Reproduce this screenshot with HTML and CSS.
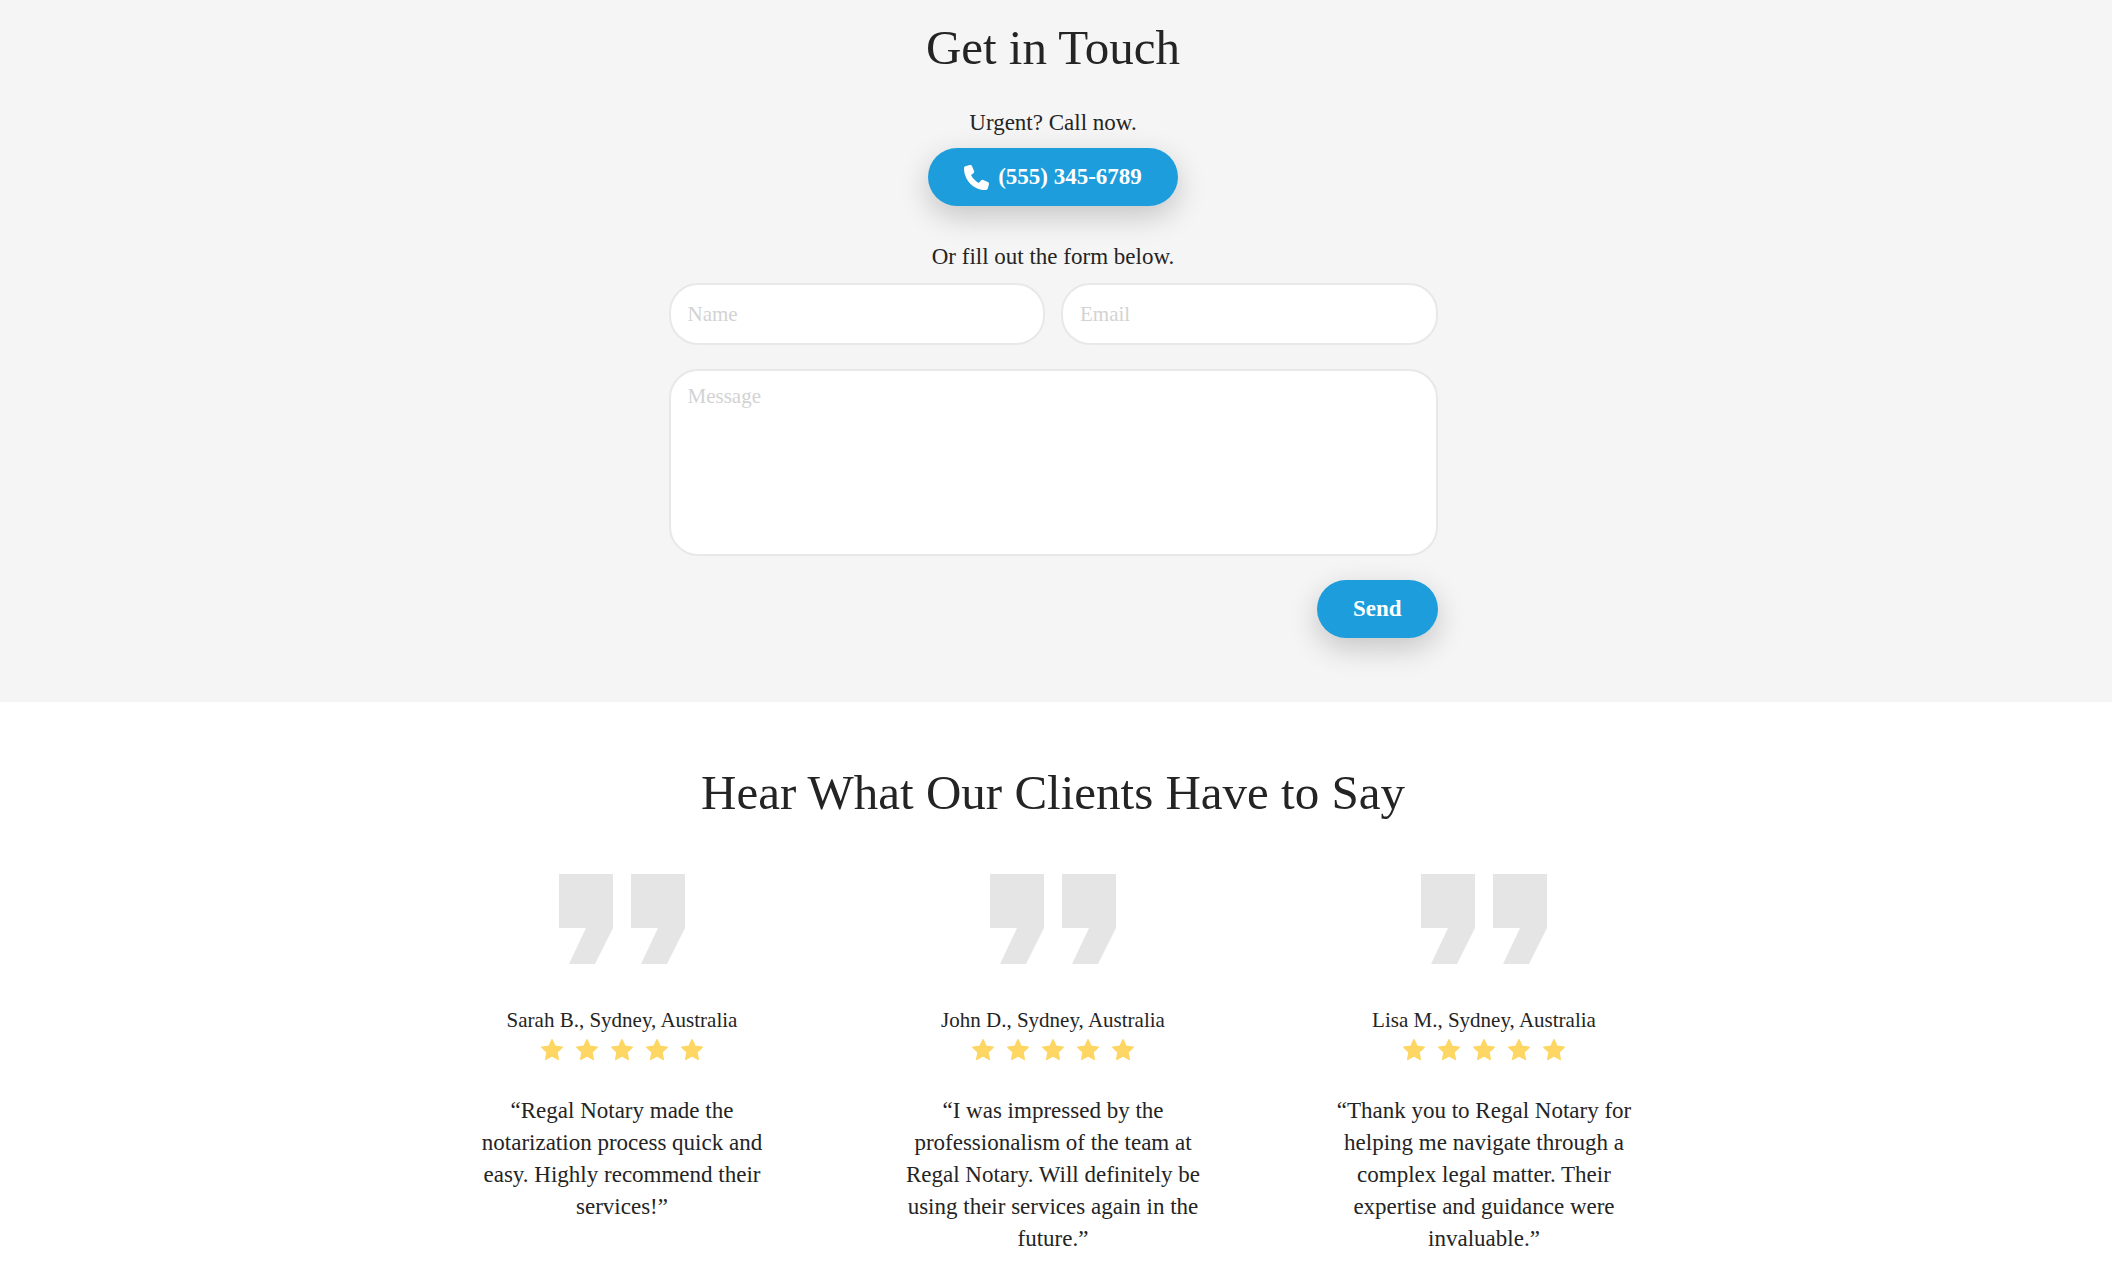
FILE: index.html
```html
<!DOCTYPE html>
<html lang="en">
<head>
<meta charset="utf-8">
<meta name="viewport" content="width=device-width, initial-scale=1">
<title>Regal Notary</title>
<link rel="stylesheet" href="styles.css">
</head>
<body>
<svg class="defs" aria-hidden="true">
  <symbol id="star" viewBox="0 0 24 24"><path d="M12 1.800l3 6.500 7.200.9-5.300 5 1.400 7.200-6.300-3.500-6.300 3.500 1.400-7.200-5.300-5 7.200-.9z" stroke="currentColor" stroke-width="1.500" stroke-linejoin="round"/></symbol>
  <symbol id="quote" viewBox="0 0 126 90"><path d="M0 0h54v54L36 90H10l17-36H0zM72 0h54v54l-18 36H82l17-36H72z"/></symbol>
</svg>
<main>
  <section class="contact">
    <h2 class="title">Get in Touch</h2>
    <p class="lead">Urgent? Call now.</p>
    <a class="button call" href="tel:5553456789">
      <svg class="phone" viewBox="0 0 512 512" aria-hidden="true"><path d="M164.900 24.600c-7.700-18.600-28-28.500-47.400-23.200l-88 24C12.100 30.200 0 46 0 64c0 247.400 200.600 448 448 448 18 0 33.800-12.100 38.600-29.500l24-88c5.300-19.400-4.600-39.700-23.200-47.400l-96-40c-16.300-6.800-35.200-2.100-46.300 11.600L304.700 368C234.300 334.700 177.300 277.700 144 207.300l49.300-40.300c13.700-11.200 18.400-30 11.600-46.300z"/></svg>
      <span>(555) 345-6789</span>
    </a>
    <p class="lead second">Or fill out the form below.</p>
    <form class="form">
      <input class="field" type="text" name="name" placeholder="Name" aria-label="Name">
      <input class="field" type="email" name="email" placeholder="Email" aria-label="Email">
      <textarea class="field message" name="message" placeholder="Message" aria-label="Message"></textarea>
      <button class="button send" type="submit">Send</button>
    </form>
  </section>
  <section class="clients">
    <h2 class="title">Hear What Our Clients Have to Say</h2>
    <div class="reviews">
      <article class="review">
        <svg class="quote" aria-hidden="true"><use href="#quote"/></svg>
        <p class="author">Sarah B., Sydney, Australia</p>
        <div class="stars" role="img" aria-label="5 out of 5 stars"><svg><use href="#star"/></svg><svg><use href="#star"/></svg><svg><use href="#star"/></svg><svg><use href="#star"/></svg><svg><use href="#star"/></svg></div>
        <p class="text">“Regal Notary made the<br>notarization process quick and<br>easy. Highly recommend their<br>services!”</p>
      </article>
      <article class="review">
        <svg class="quote" aria-hidden="true"><use href="#quote"/></svg>
        <p class="author">John D., Sydney, Australia</p>
        <div class="stars" role="img" aria-label="5 out of 5 stars"><svg><use href="#star"/></svg><svg><use href="#star"/></svg><svg><use href="#star"/></svg><svg><use href="#star"/></svg><svg><use href="#star"/></svg></div>
        <p class="text">“I was impressed by the<br>professionalism of the team at<br>Regal Notary. Will definitely be<br>using their services again in the<br>future.”</p>
      </article>
      <article class="review">
        <svg class="quote" aria-hidden="true"><use href="#quote"/></svg>
        <p class="author">Lisa M., Sydney, Australia</p>
        <div class="stars" role="img" aria-label="5 out of 5 stars"><svg><use href="#star"/></svg><svg><use href="#star"/></svg><svg><use href="#star"/></svg><svg><use href="#star"/></svg><svg><use href="#star"/></svg></div>
        <p class="text">“Thank you to Regal Notary for<br>helping me navigate through a<br>complex legal matter. Their<br>expertise and guidance were<br>invaluable.”</p>
      </article>
    </div>
  </section>
</main>
</body>
</html>
```
FILE: styles.css
```css
* { box-sizing: border-box; }

body {
  margin: 0;
  background: #fff;
  color: #242424;
  font-family: "Liberation Serif", serif;
  font-size: 23px;
  line-height: 32px;
}

h2, p { margin: 0; }

.defs { display: none; }

.contact,
.clients {
  display: flex;
  flex-direction: column;
  align-items: center;
  padding: 18px 22px 64px 16px;
}

.contact { background: #f5f5f5; }

.title {
  font-size: 49px;
  font-weight: 400;
  line-height: 60px;
  text-align: center;
}

.lead { margin: 29px 0 9px; }
.lead.second { margin: 35px 0 10px; }

.button {
  display: flex;
  align-items: center;
  justify-content: center;
  gap: 9px;
  height: 58px;
  padding: 0 36px;
  border: 0;
  border-radius: 29px;
  background: #1d9ddb;
  box-shadow: 0 10px 30px rgba(0, 0, 0, .2);
  color: #fff;
  font: 700 23px/32px "Liberation Serif", serif;
  text-decoration: none;
}

.phone {
  width: 25px;
  height: 25px;
  fill: #fff;
}

.form {
  display: grid;
  grid-template-columns: 1fr 1fr;
  gap: 24px 16px;
  width: 100%;
  max-width: 769px;
}

.field {
  width: 100%;
  height: 62px;
  padding: 0 17px;
  border: 2px solid #e8e8e8;
  border-radius: 29px;
  background: #fff;
  color: #242424;
  font: 21px/28px "Liberation Serif", serif;
}

.field::placeholder { color: #d3d3d3; opacity: 1; }

.message {
  grid-column: 1 / -1;
  height: 187px;
  padding-top: 11px;
  resize: none;
}

.send {
  grid-column: 2;
  justify-self: end;
}

.clients { padding-top: 61px; }

.reviews {
  display: grid;
  grid-template-columns: repeat(3, 1fr);
  width: 100%;
  max-width: 1293px;
  margin-top: 51px;
}

.review {
  display: flex;
  flex-direction: column;
  align-items: center;
  text-align: center;
}

.quote {
  width: 126px;
  height: 90px;
  fill: #e5e5e5;
}

.author {
  margin-top: 40px;
  font-size: 21px;
}

.stars {
  display: flex;
  gap: 11px;
  margin: 2px 0 33px;
}

.stars svg {
  width: 24px;
  height: 24px;
  color: #fdd663;
  fill: #fdd663;
}
```
